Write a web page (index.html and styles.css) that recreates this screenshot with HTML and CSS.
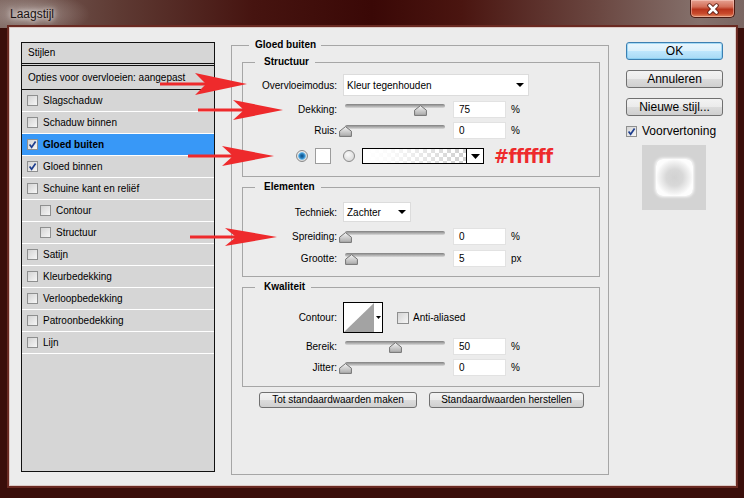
FILE: index.html
```html
<!DOCTYPE html>
<html lang="nl">
<head>
<meta charset="utf-8">
<title>Laagstijl</title>
<link rel="stylesheet" href="styles.css">
</head>
<body>
<div class="window">
  <div class="titlebar">
    <span class="title">Laagstijl</span>
    <div class="close">
      <svg width="16" height="12" viewBox="0 0 16 12"><path d="M4.5 2.5L11.5 9.5M11.5 2.5L4.5 9.5" stroke="#5a1a10" stroke-width="4.4" stroke-linecap="round"/><path d="M4.5 2.5L11.5 9.5M11.5 2.5L4.5 9.5" stroke="#fff" stroke-width="2.6" stroke-linecap="round"/></svg>
    </div>
  </div>
  <div class="client">
    <div class="styles">
      <div class="styles-head">Stijlen</div>
      <div class="styles-blend">Opties voor overvloeien: aangepast</div>
      <div class="item"><span class="cb"></span>Slagschaduw</div>
      <div class="item"><span class="cb"></span>Schaduw binnen</div>
      <div class="item item--sel"><span class="cb"><svg viewBox="0 0 9 9" width="9" height="9"><path d="M1.6 4.6L3.6 7.2L7.6 1.4" stroke="#1f3f8f" stroke-width="1.7" fill="none"/></svg></span>Gloed buiten</div>
      <div class="item"><span class="cb"><svg viewBox="0 0 9 9" width="9" height="9"><path d="M1.6 4.6L3.6 7.2L7.6 1.4" stroke="#1f3f8f" stroke-width="1.7" fill="none"/></svg></span>Gloed binnen</div>
      <div class="item"><span class="cb"></span>Schuine kant en reliëf</div>
      <div class="item item--sub"><span class="cb"></span>Contour</div>
      <div class="item item--sub"><span class="cb"></span>Structuur</div>
      <div class="item"><span class="cb"></span>Satijn</div>
      <div class="item"><span class="cb"></span>Kleurbedekking</div>
      <div class="item"><span class="cb"></span>Verloopbedekking</div>
      <div class="item"><span class="cb"></span>Patroonbedekking</div>
      <div class="item"><span class="cb"></span>Lijn</div>
    </div>

    <div class="main">
      <section class="group outer">
        <div class="legend legend--outer">Gloed buiten</div>

        <section class="group sub sub--struct">
          <div class="legend legend--sub">Structuur</div>
          <div class="row row--blend">
            <span class="lbl">Overvloeimodus:</span>
            <div class="select select--wide"><span>Kleur tegenhouden</span><svg width="8" height="4" viewBox="0 0 8 4"><path d="M0 0H8L4 4Z"/></svg></div>
          </div>
          <div class="row row--slider row--m5">
            <span class="lbl">Dekking:</span>
            <div class="slider"><div class="track"></div><svg class="thumb" style="left:75%" width="13" height="11" viewBox="0 0 13 11"><defs><linearGradient id="tg" x1="0" y1="0" x2="0" y2="1"><stop offset="0" stop-color="#f4f4f4"/><stop offset="1" stop-color="#a9a9a9"/></linearGradient></defs><path d="M6.5 0.6L12.4 5.2V10.4H0.6V5.2Z" fill="url(#tg)" stroke="#737373"/></svg></div>
            <div class="num">75</div><span class="unit">%</span>
          </div>
          <div class="row row--slider row--m4">
            <span class="lbl">Ruis:</span>
            <div class="slider"><div class="track"></div><svg class="thumb" style="left:0%" width="13" height="11" viewBox="0 0 13 11"><path d="M6.5 0.6L12.4 5.2V10.4H0.6V5.2Z" fill="url(#tg)" stroke="#737373"/></svg></div>
            <div class="num">0</div><span class="unit">%</span>
          </div>
          <div class="row row--color">
            <span class="radio radio--on"></span>
            <span class="swatch"></span>
            <span class="radio radio--off"></span>
            <div class="grad"><div class="grad-fill"></div><div class="grad-arrow"><svg width="9" height="5" viewBox="0 0 9 5"><path d="M0 0H9L4.5 5Z"/></svg></div></div>
            <span class="hex">#ffffff</span>
          </div>
        </section>

        <section class="group sub sub--elem">
          <div class="legend legend--sub">Elementen</div>
          <div class="row row--tech">
            <span class="lbl">Techniek:</span>
            <div class="select select--short"><span>Zachter</span><svg width="8" height="4" viewBox="0 0 8 4"><path d="M0 0H8L4 4Z"/></svg></div>
          </div>
          <div class="row row--slider row--m6">
            <span class="lbl">Spreiding:</span>
            <div class="slider"><div class="track"></div><svg class="thumb" style="left:0%" width="13" height="11" viewBox="0 0 13 11"><path d="M6.5 0.6L12.4 5.2V10.4H0.6V5.2Z" fill="url(#tg)" stroke="#737373"/></svg></div>
            <div class="num">0</div><span class="unit">%</span>
          </div>
          <div class="row row--slider row--m5">
            <span class="lbl">Grootte:</span>
            <div class="slider"><div class="track"></div><svg class="thumb" style="left:6%" width="13" height="11" viewBox="0 0 13 11"><path d="M6.5 0.6L12.4 5.2V10.4H0.6V5.2Z" fill="url(#tg)" stroke="#737373"/></svg></div>
            <div class="num">5</div><span class="unit">px</span>
          </div>
        </section>

        <section class="group sub sub--qual">
          <div class="legend legend--sub">Kwaliteit</div>
          <div class="row row--contour">
            <span class="lbl">Contour:</span>
            <div class="contour">
              <svg width="30" height="29" viewBox="0 0 30 29"><path d="M0 29L30 0V29Z" fill="#a3a3a3"/></svg>
              <div class="contour-arrow"><svg width="5" height="3" viewBox="0 0 5 3"><path d="M0 0H5L2.5 3Z"/></svg></div>
            </div>
            <span class="cb cb--aa"></span><span class="aa">Anti-aliased</span>
          </div>
          <div class="row row--slider row--m5">
            <span class="lbl">Bereik:</span>
            <div class="slider"><div class="track"></div><svg class="thumb" style="left:50%" width="13" height="11" viewBox="0 0 13 11"><path d="M6.5 0.6L12.4 5.2V10.4H0.6V5.2Z" fill="url(#tg)" stroke="#737373"/></svg></div>
            <div class="num">50</div><span class="unit">%</span>
          </div>
          <div class="row row--slider row--m4">
            <span class="lbl">Jitter:</span>
            <div class="slider"><div class="track"></div><svg class="thumb" style="left:0%" width="13" height="11" viewBox="0 0 13 11"><path d="M6.5 0.6L12.4 5.2V10.4H0.6V5.2Z" fill="url(#tg)" stroke="#737373"/></svg></div>
            <div class="num">0</div><span class="unit">%</span>
          </div>
        </section>

        <div class="actions">
          <button class="btn btn--def">Tot standaardwaarden maken</button>
          <button class="btn btn--reset">Standaardwaarden herstellen</button>
        </div>
      </section>
    </div>

    <div class="side">
      <button class="sbtn sbtn--ok">OK</button>
      <button class="sbtn">Annuleren</button>
      <button class="sbtn">Nieuwe stijl...</button>
      <div class="preview-check"><span class="cb"><svg viewBox="0 0 9 9" width="9" height="9"><path d="M1.6 4.6L3.6 7.2L7.6 1.4" stroke="#1f3f8f" stroke-width="1.7" fill="none"/></svg></span>Voorvertoning</div>
      <div class="preview"><div class="glow"></div></div>
    </div>
  </div>

  <svg class="arrows" width="744" height="498" viewBox="0 0 744 498">
    <g fill="#ee2a2c">
      <rect x="160" y="82.5" width="50" height="3"/>
      <path d="M195 73L247 84L195 95L206 84Z"/>
      <rect x="198" y="108.5" width="50" height="3"/>
      <path d="M233 100L283 110L233 120L244 110Z"/>
      <rect x="188" y="154.5" width="50" height="3"/>
      <path d="M222 146L274 156L222 166L233 156Z"/>
      <rect x="190" y="235.5" width="50" height="3"/>
      <path d="M225 228L277 237L225 246L236 237Z"/>
    </g>
  </svg>
</div>
</body>
</html>
```

FILE: styles.css
```css
* { box-sizing: border-box; }
html, body { margin: 0; padding: 0; }
body {
  width: 744px;
  height: 498px;
  overflow: hidden;
  background: #2a0806;
  font-family: "Liberation Sans", Arial, sans-serif;
  font-size: 10px;
  color: #000;
}
button { font-family: inherit; color: #000; padding: 0; }

.window {
  position: relative;
  width: 744px;
  height: 498px;
  background: #3a0e0a;
  display: flex;
  flex-direction: column;
}

/* title bar */
.titlebar {
  height: 28px;
  flex: none;
  display: flex;
  justify-content: space-between;
  align-items: flex-start;
  padding: 0 9px 0 10px;
  background:
    radial-gradient(ellipse 60px 22px at 30px 14px, rgba(200,190,186,.55), rgba(200,190,186,0)),
    linear-gradient(90deg, #7a625c 0%, #5e3a33 16%, #461410 34%, #3a0806 50%, #4a1510 62%, #6a4640 80%, #85716c 94%, #7a6662 100%);
}
.title {
  margin-top: 7px;
  font-size: 12px;
  color: #1a1212;
  text-shadow: 0 0 5px #fff, 0 0 9px rgba(255,255,255,.8);
}
.close {
  width: 45px;
  height: 18px;
  border: 1px solid #4a1a12;
  border-top: none;
  border-radius: 0 0 5px 5px;
  background: linear-gradient(#e6a192 0%, #d36e58 40%, #b8341c 55%, #c94a2c 80%, #e08a62 100%);
  box-shadow: inset 0 0 0 1px rgba(255,220,210,.45);
  display: flex;
  align-items: center;
  justify-content: center;
}

/* client */
.client {
  margin: 0 9px 0 10px;
  height: 457px;
  flex: none;
  background: #ececec;
  display: flex;
  align-items: flex-start;
  padding: 14px 0 0 11px;
  box-shadow: 0 0 0 1px #dccac6, 0 0 0 3px #6a2a22;
}

/* styles list */
.styles {
  width: 194px;
  height: 430px;
  flex: none;
  border: 1px solid #111;
  background: #d6d6d6;
}
.styles-head {
  height: 21px;
  line-height: 20px;
  padding-left: 6px;
  border-bottom: 1px solid #111;
}
.styles-blend {
  height: 25px;
  margin-top: 1px;
  line-height: 23px;
  padding-left: 6px;
  border-top: 1px solid #111;
  border-bottom: 1px solid #111;
}
.item {
  height: 22px;
  display: flex;
  align-items: center;
  padding-left: 5px;
  border-bottom: 1px solid #fff;
}
.item--sub { padding-left: 18px; }
.item--sel { background: #3898f7; font-weight: bold; }

.cb {
  width: 11px;
  height: 11px;
  flex: none;
  margin-right: 5px;
  border: 1px solid #8e8f8f;
  background: linear-gradient(135deg, #d4d4d4, #f6f6f6);
  display: flex;
  align-items: center;
  justify-content: center;
}

/* main */
.main {
  margin-left: 16px;
  margin-top: 3px;
  flex: none;
}
.group { border: 1px solid #a6a6a6; }
.outer { width: 378px; height: 430px; }
.legend {
  width: max-content;
  height: 14px;
  line-height: 14px;
  margin-top: -8px;
  background: #ececec;
  font-weight: bold;
}
.legend--outer { margin-left: 17px; padding: 0 5px 0 6px; }
.legend--sub { margin-left: 12px; padding: 0 6px 0 9px; }

.sub { width: 358px; margin-left: 10px; margin-top: 10px; }
.sub--struct { height: 115px; }
.sub--elem { height: 90px; }
.sub--qual { height: 100px; }

.row { display: flex; align-items: center; }
.lbl {
  width: 94px;
  flex: none;
  text-align: right;
  margin-right: 6px;
}
.row--blend { margin-top: 5px; height: 22px; }
.row--slider { height: 17px; }
.row--m4 { margin-top: 4px; }
.row--m5 { margin-top: 5px; }
.row--m6 { margin-top: 6px; }
.row--tech { margin-top: 8px; height: 20px; }
.row--contour { margin-top: 8px; height: 31px; }
.row--color { margin-top: 9px; height: 16px; }

.select {
  height: 100%;
  background: #fff;
  border: 1px solid #dcdcdc;
  display: flex;
  align-items: center;
  justify-content: space-between;
  padding: 0 4px 0 3px;
}
.select--wide { width: 186px; }
.select--short { width: 68px; }

.slider {
  position: relative;
  width: 100px;
  height: 12px;
  margin: 3px 0 0 2px;
  align-self: flex-start;
  flex: none;
}
.track {
  height: 4px;
  border-radius: 2px;
  background: linear-gradient(#7f7f7f, #b4b4b4 60%, #dadada);
}
.thumb {
  position: absolute;
  top: 1px;
  margin-left: -6px;
}
.num {
  width: 53px;
  height: 17px;
  margin-left: 8px;
  flex: none;
  background: #fff;
  border: 1px solid #e2e2e2;
  padding-left: 5px;
  line-height: 15px;
}
.unit { margin-left: 5px; }

/* colour row */
.radio {
  width: 12px;
  height: 12px;
  flex: none;
  border-radius: 50%;
  border: 1px solid #8a8a8a;
}
.radio--on {
  margin-left: 53px;
  background:
    radial-gradient(circle, #0b4a80 0, #2a84c4 2.4px, #7fc1ea 3.6px, rgba(255,255,255,0) 4.2px),
    radial-gradient(circle at 40% 35%, #fafafa, #cfcfcf);
}
.radio--off {
  margin-left: 12px;
  background: radial-gradient(circle at 40% 35%, #fafafa, #d0d0d0);
}
.swatch {
  width: 16px;
  height: 16px;
  margin-left: 7px;
  flex: none;
  background: #fff;
  border: 1px solid #9c9c9c;
}
.grad {
  width: 122px;
  height: 16px;
  margin-left: 7px;
  flex: none;
  border: 1px solid #000;
  display: flex;
}
.grad-fill {
  flex: 1;
  background:
    linear-gradient(90deg, #fff 0%, rgba(255,255,255,.9) 25%, rgba(255,255,255,0) 100%),
    repeating-conic-gradient(#cfcfcf 0 25%, #fff 0 50%) 0 0 / 8px 8px;
}
.grad-arrow {
  width: 17px;
  border-left: 1px solid #000;
  background: #fff;
  display: flex;
  align-items: center;
  justify-content: center;
}
.hex {
  margin-left: 10px;
  font-family: "DejaVu Sans", sans-serif;
  font-stretch: condensed;
  font-weight: bold;
  font-size: 20px;
  line-height: 16px;
  letter-spacing: -0.5px;
  color: #ee2a2c;
}

/* contour row */
.contour {
  width: 40px;
  height: 31px;
  flex: none;
  border: 1px solid #000;
  background: #fff;
  display: flex;
}
.contour svg { display: block; }
.contour-arrow {
  flex: 1;
  display: flex;
  align-items: center;
  justify-content: center;
}
.cb--aa { width: 12px; height: 12px; margin-left: 14px; margin-right: 4px; }

/* action buttons */
.actions {
  display: flex;
  gap: 12px;
  margin-top: 5px;
  padding-left: 27px;
}
.btn {
  height: 16px;
  font-size: 10px;
  border: 1px solid #707070;
  border-radius: 3px;
  background: linear-gradient(#f3f3f3 0%, #ebebeb 50%, #dcdcdc 51%, #cfcfcf 100%);
  line-height: 14px;
}
.btn--def { width: 158px; }
.btn--reset { width: 155px; }

/* side column */
.side {
  width: 97px;
  margin-left: 17px;
  flex: none;
  display: flex;
  flex-direction: column;
}
.sbtn {
  height: 18px;
  font-size: 12px;
  line-height: 16px;
  border: 1px solid #707070;
  border-radius: 3px;
  background: linear-gradient(#f3f3f3 0%, #ebebeb 50%, #dcdcdc 51%, #cfcfcf 100%);
  margin-top: 10px;
}
.sbtn--ok {
  margin-top: 0;
  border-color: #3c7fb1;
  background: linear-gradient(#eaf6fd 0%, #d9f0fc 50%, #bee6fd 51%, #a7d9f5 100%);
  box-shadow: inset 0 0 0 1px rgba(120,200,240,.6);
}
.preview-check {
  display: flex;
  align-items: center;
  height: 14px;
  margin-top: 8px;
  font-size: 12px;
}
.preview {
  width: 64px;
  height: 65px;
  margin: 7px 0 0 16px;
  background: #d3d3d3;
  display: flex;
  align-items: center;
  justify-content: center;
}
.glow {
  width: 37px;
  height: 37px;
  border-radius: 7px;
  background: radial-gradient(closest-side, #d2d2d2 0%, #d8d8d8 45%, #f2f2f2 85%, #fdfdfd 100%);
  box-shadow: 0 0 3px 1px rgba(255,255,255,.9);
}

/* red annotation arrows */
.arrows {
  position: absolute;
  left: 0;
  top: 0;
  pointer-events: none;
}
```
